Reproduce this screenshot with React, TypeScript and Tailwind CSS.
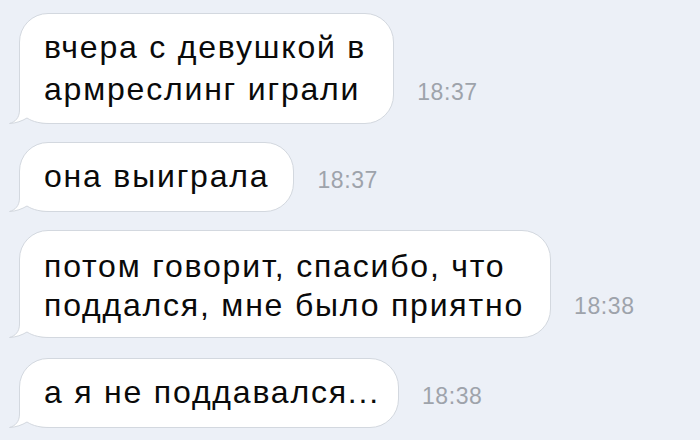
import React from "react";

function Tail() {
  return (
    <svg
      className="absolute left-[-13px] bottom-[-3px]"
      width={50}
      height={34}
      viewBox="-12 -32 50 34"
    >
      <path
        d="M0.5 -31 L0.5 -14 C0.5 -6 -4 -2 -9.5 -0.5 C-3 -0.8 3 -3 8 -6 C14 -2 22 -0.5 30 -0.5 L30 -31 Z"
        fill="#ffffff"
      />
      <path
        d="M0.5 -31 L0.5 -14 C0.5 -6 -4 -2 -9.5 -0.5 C-3 -0.8 3 -3 8 -6 C14 -2 22 -0.5 30 -0.5"
        fill="none"
        stroke="#d3d8df"
        strokeWidth={1}
      />
    </svg>
  );
}

function Row({
  lines,
  time,
  bubbleClass,
  rowClass,
}: {
  lines: string[];
  time: string;
  bubbleClass: string;
  rowClass: string;
}) {
  return (
    <div className={"flex items-end " + rowClass}>
      <div
        className={
          "relative bg-white border border-[#d3d8df] rounded-[29px] pl-[24px] text-[32px] tracking-[1.8px] text-[#0a0a0a] whitespace-nowrap " +
          bubbleClass
        }
      >
        <Tail />
        {lines.map((l, i) => (
          <div key={i} className="relative">
            {l}
          </div>
        ))}
      </div>
      <div className="ml-[23px] mb-[20px] text-[23px] tracking-[0.6px] leading-none text-[#9ea3ab]">
        {time}
      </div>
    </div>
  );
}

export default function App() {
  return (
    <div
      className="w-[700px] h-[440px] overflow-hidden bg-[#ecf0f7] pl-[19px] pt-[13px] flex flex-col"
      style={{ fontFamily: '"Liberation Sans", Arial, sans-serif' }}
    >
      <Row
        lines={["вчера с девушкой в", "армреслинг играли"]}
        time="18:37"
        bubbleClass="leading-[42px] pt-[12px] pb-[13px] pr-[27px]"
        rowClass=""
      />
      <Row
        lines={["она выиграла"]}
        time="18:37"
        bubbleClass="leading-[42px] pt-[12px] pb-[14px] pr-[24px]"
        rowClass="mt-[18px]"
      />
      <Row
        lines={["потом говорит, спасибо, что", "поддался, мне было приятно"]}
        time="18:38"
        bubbleClass="leading-[39px] pt-[16px] pb-[12px] pr-[26px]"
        rowClass="mt-[18px]"
      />
      <Row
        lines={["а я не поддавался..."]}
        time="18:38"
        bubbleClass="leading-[42px] pt-[12px] pb-[14px] pr-[18px]"
        rowClass="mt-[20px]"
      />
    </div>
  );
}
